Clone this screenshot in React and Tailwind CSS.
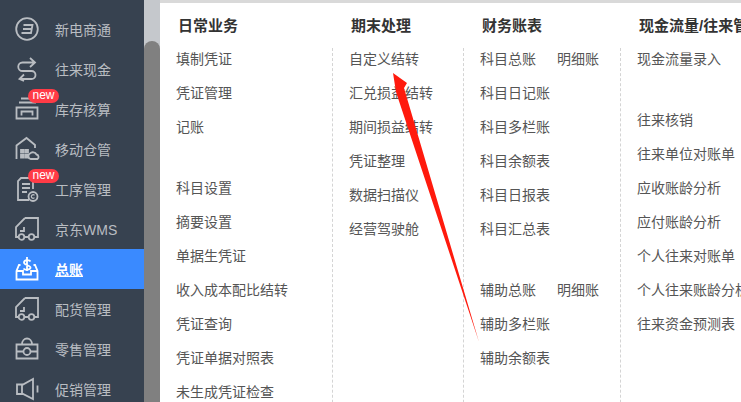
const TRUCK = (
  <>
    <path d="M10 1h13v19h-3.500M13.500 20h-4M3 20H1V10l9-9v0" />
    <path d="M5 14h4v-4" />
    <circle cx="6.500" cy="20" r="2.800" />
    <circle cx="16.500" cy="20" r="2.800" />
  </>
)

const ICONS = {
  top: <circle cx="12" cy="-8" r="10.500" />,
  shop: (
    <>
      <circle cx="12" cy="12" r="10.800" />
      <path d="M8.500 8h9l-1.500 8H6.500M8 12h8" />
    </>
  ),
  cash: <path d="M15 1l5 4.500-5 4.500M19 5.500H7.500a4 4 0 0 0 0 8.500h9a4 4 0 0 1 0 8H5M9 17.500L4.500 22 9 24" />,
  stock: (
    <>
      <path d="M6 1.500h13M4 5.500h17M1.500 10.500h21v11h-21z" />
      <path d="M6.500 18.500v-4h11v4" />
    </>
  ),
  mobile: (
    <>
      <path d="M1.500 22V8.500L11.500 1 20 8v3" />
      <path d="M6 13h2.500v2.500H6zM10.500 13H13v2.500h-2.500zM6 18h2.500v2.500H6zM10.500 18H13v2.500h-2.500z" fill="currentColor" />
      <path d="M15.500 22a3 3 0 0 1-.5-5.500 4 4 0 0 1 6.500 1 2.500 2.500 0 0 1 1 4.500z" />
    </>
  ),
  process: (
    <>
      <path d="M18 12V1H6L3 4v19h11" />
      <path d="M7 7h8M7 11h8M7 15h5" />
      <circle cx="18" cy="19.500" r="4.500" />
      <path d="M19.500 18.300a1.800 1.800 0 1 0 0 2.400" strokeWidth="1.200" />
    </>
  ),
  truck: TRUCK,
  ledger: (
    <>
      <path d="M5.500 8H4L1.500 14v8.500h21V14L20 8h-1.500M1.500 14h6.500v3.500h8V14h6.500" />
      <path d="M15.500 4.500C14.500 2.500 9 2.500 9 5.500S15.500 8 15.500 10.500 10 13.500 8.500 11.500M12 0v14" />
    </>
  ),
  bag: (
    <>
      <path d="M1.500 7.500h21v14h-21z" />
      <path d="M7 7.500c0-8 10-8 10 0M1.500 14.500h7M15.500 14.500h7" />
      <circle cx="12" cy="14.500" r="3.500" />
    </>
  ),
  horn: <path d="M2 7.500h6L18 2v20L8 17H2zM7 8v9M22.500 8.500v7" />,
}

const NAV = [
  { icon: 'top', label: '' },
  { icon: 'shop', label: '新电商通' },
  { icon: 'cash', label: '往来现金' },
  { icon: 'stock', label: '库存核算', badge: true },
  { icon: 'mobile', label: '移动仓管' },
  { icon: 'process', label: '工序管理', badge: true },
  { icon: 'truck', label: '京东WMS' },
  { icon: 'ledger', label: '总账', active: true },
  { icon: 'truck', label: '配货管理' },
  { icon: 'bag', label: '零售管理' },
  { icon: 'horn', label: '促销管理' },
]

const COLUMNS = [
  {
    title: '日常业务',
    width: 'w-[173px]',
    border: true,
    items: [
      { label: '填制凭证' },
      { label: '凭证管理' },
      { label: '记账' },
      { label: '科目设置', spaced: true },
      { label: '摘要设置' },
      { label: '单据生凭证' },
      { label: '收入成本配比结转' },
      { label: '凭证查询' },
      { label: '凭证单据对照表' },
      { label: '未生成凭证检查' },
    ],
  },
  {
    title: '期末处理',
    width: 'w-[131px]',
    border: true,
    items: [
      { label: '自定义结转' },
      { label: '汇兑损益结转' },
      { label: '期间损益结转' },
      { label: '凭证整理' },
      { label: '数据扫描仪' },
      { label: '经营驾驶舱' },
    ],
  },
  {
    title: '财务账表',
    width: 'w-[157px]',
    border: true,
    items: [
      { label: '科目总账', extra: '明细账' },
      { label: '科目日记账' },
      { label: '科目多栏账' },
      { label: '科目余额表' },
      { label: '科目日报表' },
      { label: '科目汇总表' },
      { label: '辅助总账', extra: '明细账', spaced: true },
      { label: '辅助多栏账' },
      { label: '辅助余额表' },
    ],
  },
  {
    title: '现金流量/往来管理',
    width: 'w-[200px]',
    items: [
      { label: '现金流量录入' },
      { label: '往来核销', spaced: true },
      { label: '往来单位对账单' },
      { label: '应收账龄分析' },
      { label: '应付账龄分析' },
      { label: '个人往来对账单' },
      { label: '个人往来账龄分析' },
      { label: '往来资金预测表' },
    ],
  },
]

function NavRow({ icon, label, badge, active }) {
  return (
    <div
      className={`relative flex h-10 shrink-0 items-center pl-[15px] text-sm ${
        active ? 'bg-[#3a8aff] font-bold text-white underline' : 'text-[#b9bdc2]'
      }`}
    >
      <svg
        width="24"
        height="24"
        viewBox="0 0 24 24"
        fill="none"
        stroke="currentColor"
        strokeWidth="1.800"
        className="shrink-0 overflow-visible"
      >
        {ICONS[icon]}
      </svg>
      <span className="ml-4 whitespace-nowrap pt-[2px]">{label}</span>
      {badge && (
        <span className="absolute left-7 top-0 flex h-[14px] w-[31px] items-center justify-center rounded-full bg-[#ff3b46] text-[12px] font-normal text-white">
          new
        </span>
      )}
    </div>
  )
}

function MenuColumn({ title, width, border, items }) {
  return (
    <section className={`shrink-0 ${width}`}>
      <h2 className="flex h-[45px] items-center pl-[18px] pt-[1px] text-[15px] font-bold whitespace-nowrap text-[#333]">
        {title}
      </h2>
      <ul className={`h-[400px] pl-4 text-sm text-[#555] ${border ? 'border-r border-dashed border-[#d4d4d4]' : ''}`}>
        {items.map((item) => (
          <li
            key={item.label}
            className={`mb-3 flex h-[22px] items-center whitespace-nowrap ${item.spaced ? 'mt-[39px]' : ''}`}
          >
            <span className={item.extra ? 'w-[77px]' : ''}>{item.label}</span>
            {item.extra && <span>{item.extra}</span>}
          </li>
        ))}
      </ul>
    </section>
  )
}

export default function App() {
  return (
    <div className="relative flex h-[402px] w-[741px] overflow-hidden bg-white font-['Liberation_Sans','Noto_Sans_CJK_SC',sans-serif]">
      <nav className="-mt-[31px] flex h-[433px] w-36 shrink-0 flex-col overflow-hidden bg-[#374250]">
        {NAV.map((row) => (
          <NavRow key={row.label || row.icon} {...row} />
        ))}
      </nav>

      <div className="flex w-4 shrink-0 flex-col bg-[#c5c8cc] pt-[41px]">
        <div className="flex-1 rounded-t-lg bg-[#808080]" />
      </div>

      <main className="flex min-w-0 flex-1 flex-col">
        <div className="h-[3px] shrink-0 bg-[#d9d9d9]" />
        <div className="flex">
          {COLUMNS.map((col) => (
            <MenuColumn key={col.title} {...col} />
          ))}
        </div>
      </main>

      {/* annotation arrow drawn on top of the screenshot */}
      <svg width="741" height="402" className="pointer-events-none absolute left-0 top-0">
        <polygon points="393,73 407,83 404,88 479,342 396,92" fill="#ff1a0d" />
      </svg>
    </div>
  )
}
